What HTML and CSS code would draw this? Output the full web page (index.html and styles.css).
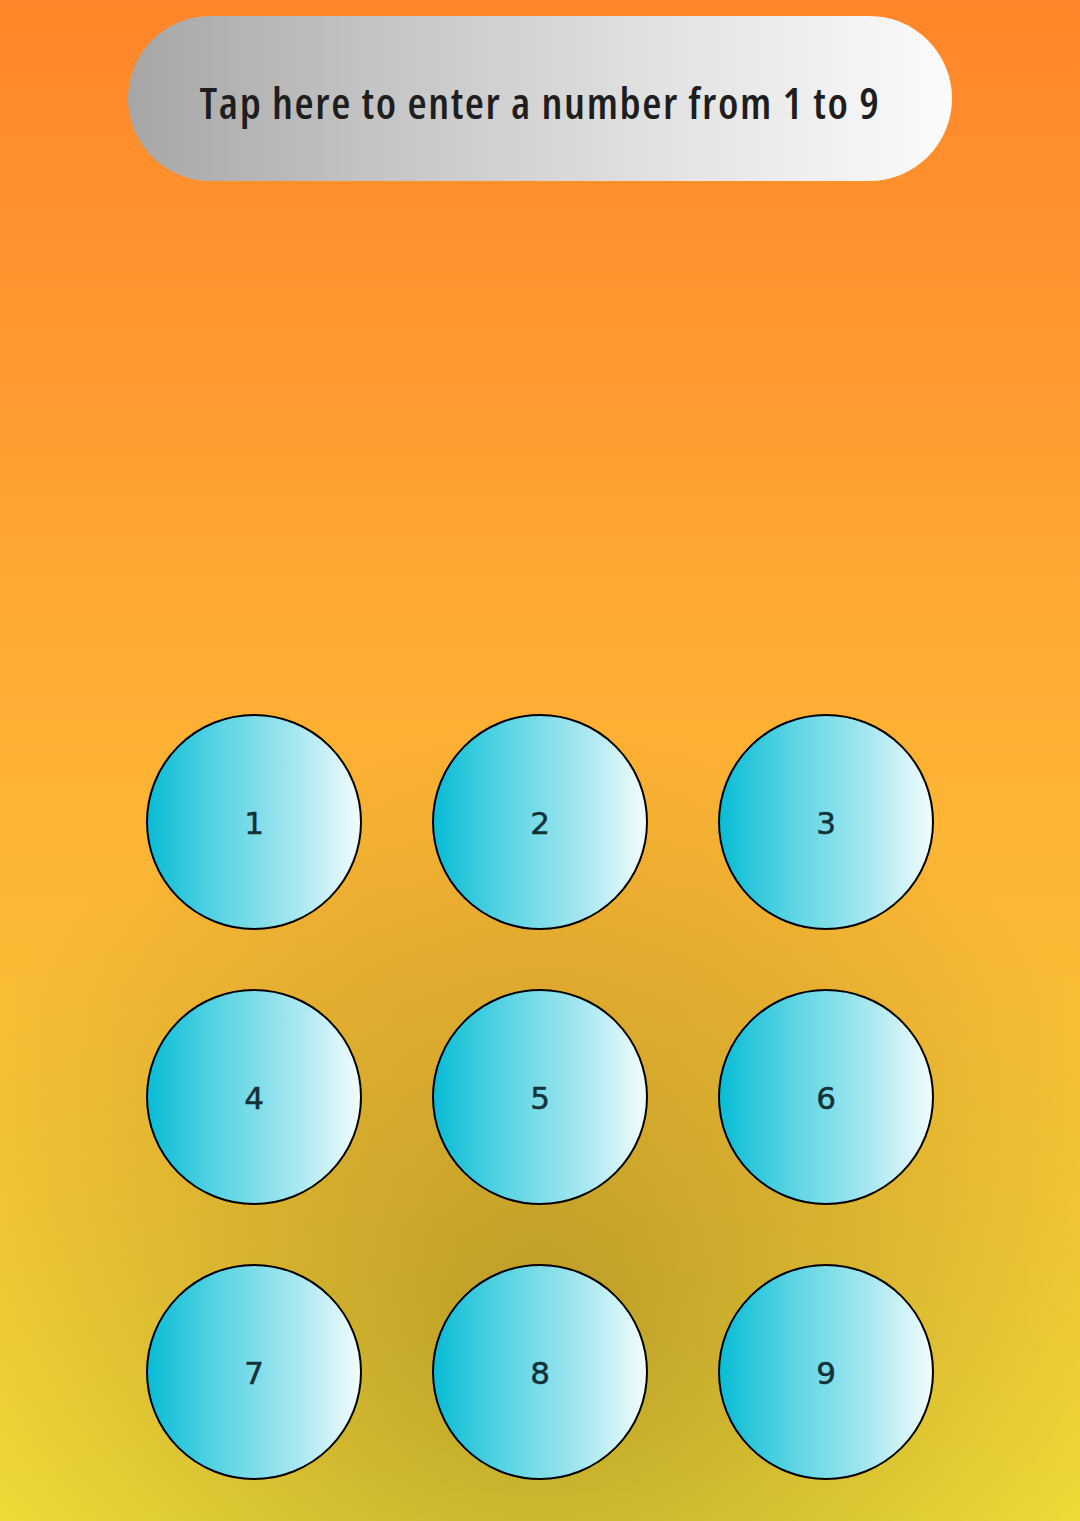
FILE: index.html
```html
<!DOCTYPE html>
<html>
<head>
<meta charset="utf-8">
<link rel="stylesheet" href="styles.css">
</head>
<body>
<div class="screen">
  <div class="prompt">Tap here to enter a number from 1 to 9</div>
  <div class="pad">
    <div class="key">1</div>
    <div class="key">2</div>
    <div class="key">3</div>
    <div class="key">4</div>
    <div class="key">5</div>
    <div class="key">6</div>
    <div class="key">7</div>
    <div class="key">8</div>
    <div class="key">9</div>
  </div>
</div>
</body>
</html>
```
FILE: styles.css
```css
html, body {
  margin: 0;
  padding: 0;
}
.screen {
  width: 1080px;
  height: 1521px;
  overflow: hidden;
  display: flex;
  flex-direction: column;
  align-items: center;
  background:
    radial-gradient(ellipse 640px 600px at 50% 87%, rgba(115, 95, 20, 0.45), rgba(115, 95, 20, 0) 100%),
    linear-gradient(180deg, #ff862a 0%, #ff9a2f 25%, #ffae33 45%, #f9bc35 65%, #f4e03a 100%);
}
.prompt {
  margin-top: 16px;
  width: 824px;
  height: 165px;
  border-radius: 83px;
  background: linear-gradient(90deg, #a6a6a6 0%, #c4c4c4 30%, #e2e2e2 65%, #fbfbfb 100%);
  display: flex;
  align-items: center;
  justify-content: center;
  font-family: "Open Sans", "DejaVu Sans Condensed", sans-serif;
  font-stretch: 75%;
  font-weight: 600;
  font-size: 44px;
  letter-spacing: 1.6px;
  color: #1e1e1e;
  padding-top: 6px;
  box-sizing: border-box;
}
.pad {
  margin-top: 533px;
  display: grid;
  grid-template-columns: repeat(3, 216px);
  grid-auto-rows: 216px;
  column-gap: 70px;
  row-gap: 59px;
}
.key {
  box-sizing: border-box;
  border: 2.5px solid #000;
  border-radius: 50%;
  background: linear-gradient(90deg, #0abcd6 0%, #5dd5e4 35%, #a7e7f0 70%, #f2fcfd 100%);
  display: flex;
  align-items: center;
  justify-content: center;
  font-family: "DejaVu Sans", sans-serif;
  font-size: 31px;
  color: #123238;
  -webkit-text-stroke: 0.5px #123238;
  padding-top: 2px;
}
```
